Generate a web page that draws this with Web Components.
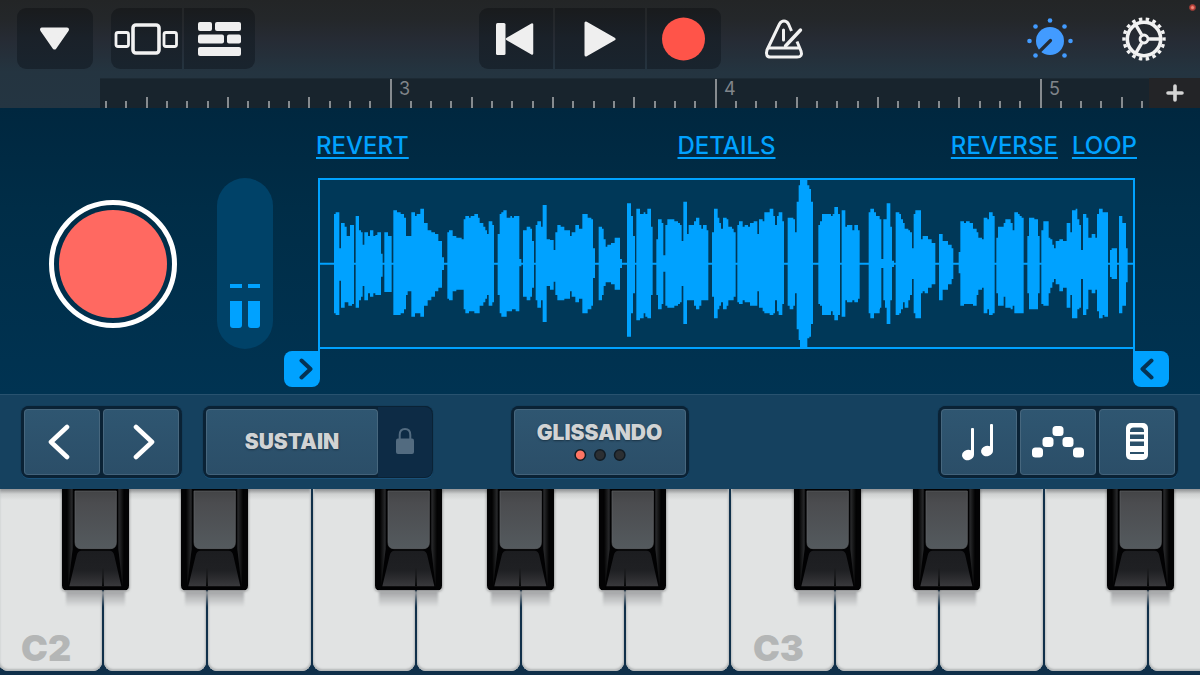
<!DOCTYPE html>
<html lang="en">
<head>
<meta charset="utf-8">
<title>Sampler</title>
<style>
  html { height: 100%; }
  body { margin: 0; min-height: 100%; display: flex; font-family: Inter, "Liberation Sans", sans-serif; background: #0f2f49; overflow: hidden; }
  sampler-app { flex: 1; min-width: 0; }
</style>
</head>
<body>
<sampler-app></sampler-app>

<script>
const define = (name, html, setup) => {
  const template = document.createElement('template');
  template.innerHTML = '<style>*{box-sizing:border-box}button{font:inherit;color:inherit;margin:0;padding:0;border:0;background:none;cursor:pointer}svg{display:block}</style>' + html;
  customElements.define(name, class extends HTMLElement {
    connectedCallback() {
      if (this.shadowRoot) return;
      const root = this.attachShadow({ mode: 'open' });
      root.append(template.content.cloneNode(true));
      if (setup) setup(this, root);
    }
  });
};

/* Segmented group of dark buttons in the top bar */
define('bar-group', `
<style>
  :host { display: flex; gap: 2px; height: 61px; border-radius: 9px; overflow: hidden; }
</style><slot></slot>`);

define('bar-button', `
<style>
  :host { display: block; width: 74px; }
  :host([wide]) { width: 90px; }
  :host([back]) { width: 76px; }
  :host([view]) { width: 71px; }
  button { display: grid; place-items: center; width: 100%; height: 100%; background: linear-gradient(#191b1d, #1a2129 50%, #19242e); }
</style><button><slot></slot></button>`, (host, root) => {
  root.querySelector('button').setAttribute('aria-label', host.getAttribute('label'));
});

define('icon-button', `
<style>:host { display: block; } button { display: block; }</style>
<button><slot></slot></button>`, (host, root) => {
  root.querySelector('button').setAttribute('aria-label', host.getAttribute('label'));
});

define('top-bar', `
<style>
  :host { display: grid; grid-template-columns: 1fr auto 1fr; padding: 8px 17px 9px; }
  .left, .right { display: flex; align-items: center; }
  .left { gap: 18px; }
  .right { padding: 0 17px 0 43px; }
  .knob { margin-left: auto; margin-right: 49px; }
  .live { position: absolute; top: 4px; right: 4px; width: 7px; height: 7px; border-radius: 50%; background: #c9493f; border: 1px solid #8d3b36; }
  .live::after { content: ""; display: block; width: 3px; height: 3px; margin: 1px; border-radius: 50%; background: #f08a7c; }
</style>
<div class="left">
  <bar-group><bar-button back label="Browser">
    <svg width="34" height="24" viewBox="0 0 34 24"><path d="M4 2.500H29L16.500 20.500Z" fill="#efefef" stroke="#efefef" stroke-width="4" stroke-linejoin="round"/></svg>
  </bar-button></bar-group>
  <bar-group>
    <bar-button view label="Instruments"><svg width="66" height="34" viewBox="0 0 66 34" fill="none" stroke="#f2f2f2"><rect x="19" y="3" width="26" height="28" rx="3" stroke-width="3.600"/><rect x="2" y="10.500" width="12.500" height="14" rx="2" stroke-width="2.800"/><rect x="50" y="10.500" width="12.500" height="14" rx="2" stroke-width="2.800"/></svg></bar-button>
    <bar-button view label="Tracks"><svg width="43" height="34" viewBox="0 0 43 34" fill="#efefef"><rect width="14" height="9" rx="2"/><rect x="17" width="26" height="9" rx="2"/><rect y="12.500" width="26" height="9" rx="2"/><rect x="29" y="12.500" width="14" height="9" rx="2"/><rect y="25" width="43" height="9" rx="2"/></svg></bar-button>
  </bar-group>
</div>
<bar-group>
  <bar-button label="Rewind"><svg width="40" height="34" viewBox="0 0 40 34" fill="#efefef"><rect y="1" width="9.500" height="32" rx="1.500"/><path d="M11 17 36 2.500V31.500Z" stroke="#efefef" stroke-width="2.500" stroke-linejoin="round"/></svg></bar-button>
  <bar-button wide label="Play"><svg width="32" height="38" viewBox="0 0 32 38"><path d="M2 3V35L30 19Z" fill="#efefef" stroke="#efefef" stroke-width="3" stroke-linejoin="round"/></svg></bar-button>
  <bar-button label="Record"><svg width="44" height="44"><circle cx="21.500" cy="22" r="21.500" fill="#ff5449"/></svg></bar-button>
</bar-group>
<div class="right">
  <icon-button label="Metronome"><svg width="40" height="40" viewBox="0 0 40 40" fill="none" stroke="#f2f2f2" stroke-width="3" stroke-linecap="round" stroke-linejoin="round"><path d="M27.500 12 24.500 5Q22.800 2 20 2T15.500 5L3 31Q1 38 6.500 38H33Q39 38 37 32L33 22.500M3 29H36.500" stroke-linecap="butt"/><path d="M19.500 11V21" stroke-width="3"/><path d="M21.500 27 36.500 11" stroke-width="3.400"/></svg></icon-button>
  <icon-button class="knob" label="Track controls"><svg width="46" height="44" viewBox="-23 -24 46 44" fill="#429bff"><circle r="14"/><g><circle cx="-20.500" r="2.300"/><circle cx="20.500" r="2.300"/><circle cy="-20.500" r="2.300"/><circle cx="-14.500" cy="-14.500" r="2.300"/><circle cx="14.500" cy="-14.500" r="2.300"/><circle cx="-14.500" cy="14.500" r="2.300"/><circle cx="14.500" cy="14.500" r="2.300"/></g><path d="M.5-.5-9.500 9.500" stroke="#242c36" stroke-width="3.200" stroke-linecap="round"/></svg></icon-button>
  <icon-button label="Settings"><svg width="44" height="44" viewBox="-22 -22 44 44" fill="none" stroke="#f2f2f2"><circle r="16.700" stroke-width="3.600"/><circle r="20" stroke-width="3.400" pathLength="180" stroke-dasharray="5 5" stroke-dashoffset="2.500"/><circle r="4" stroke-width="2.800"/><path d="M5 0H17M-2.500-4.300-8.500-14.700M-2.500 4.300-8.500 14.700" stroke-width="3.400"/></svg></icon-button>
</div>
<span class="live"></span>`);

/* One bar of the timeline: sixteen ticks and the bar's number */
define('ruler-bar', `
<style>
  :host { display: flex; position: relative; flex: 0 0 325px; height: 100%; overflow: hidden; }
  :host([partial]) { flex-basis: 290px; justify-content: flex-end; }
  svg { flex: none; fill: #868b8f; }
  span { position: absolute; left: 9px; top: 0; font-size: 18px; line-height: 21px; color: #80858a; }
</style><svg width="325" height="30"></svg><span><slot></slot></span>`, (host, root) => {
  let out = '';
  for (let i = 0; i < 16; i++) {
    const h = i === 0 ? 29 : i % 4 === 0 ? 11 : 7;
    out += `<rect x="${Math.floor(i * 325 / 16)}" y="${30 - h}" width="2" height="${h}"/>`;
  }
  root.querySelector('svg').innerHTML = out;
});

define('time-ruler', `
<style>
  :host { display: flex; height: 30px; padding-left: 100px; }
  .bars { flex: 1; min-width: 0; display: flex; overflow: hidden; background: #18242d; box-shadow: inset 0 1px #1d2a34; }
  button { width: 51px; background: #232427; display: grid; place-items: center; }
</style>
<div class="bars"><ruler-bar partial></ruler-bar><ruler-bar>3</ruler-bar><ruler-bar>4</ruler-bar><ruler-bar>5</ruler-bar></div>
<button aria-label="Add section"><svg width="18" height="18" viewBox="0 0 18 18" stroke="#d4d4d4" stroke-width="3.600" stroke-linecap="round"><path d="M9 2V16M2 9H16"/></svg></button>`);

define('level-meter', `
<style>
  :host { display: flex; justify-content: center; align-items: flex-end; gap: 6px; width: 56px; height: 171px; border-radius: 28px; background: #004268; padding-bottom: 21px; }
  i { display: block; width: 12px; height: 27px; border-radius: 0 0 3px 3px; background: #00a2ff; }
  i::before { content: ""; display: block; height: 4px; background: #00a2ff; transform: translateY(-17px); }
</style><i></i><i></i>`);

/* Sample envelope: x, top, bottom of each step; a lone x opens a gap. */
const ENVELOPE = [
  [-24, '72,282,580;77,277,585;88,385,482;93,309,563;104,320,547;110,348,547;115,348,557;120,315,557;126,315,552;132;137,288,563;147,331,541;153,337,530;158,374,498;163,337,541;174,348,520;180,331,530;190,348,520;196,345,525;202,337,525;213,401,470;218;223,337,516;234,348,516;245;250,271,585;261,277,585;272,282,580;282,293,568;288,348,525;293,348,514;304,277,590;315,288,580;320,282,580;331,266,590;342,309,557;353,331,541;364,337,530;375,342,514;385,363,503;396,412,450;402;412,337,536;417,331,541;428,348,514;439,353,509;455,358,509;461,298,568;466,288,580;477,293,574;482,288,574;493,282,580;504,293,580;509,309,557;520,320,547;526,331,536;531,342,525;536,304,557;547,315,547;552;563,342,525;569,282,580;574,277,590;580,271,590;590,293,574;601,288,574;606,293,568;612,288,568;617,288,574;628,417,439;634;639,331,530;650,320,541;661,326,530;666,363,503;672;677,315,541;682,304,563;693,320,541;698,255,606;710,358,498;720,360,509;731,390,485;736,337,525;742,315,541;752,320,541;763,331,536;780,348,514;785,337,530;796,315,547;807,326,536;817,282,580;833,293,568;844,298,557;849,385,474;855;866,320,541'],
  [846, '0,320,541;6,326,525;11,358,498;17,380,487;22,374,487;33,369,493;44,353,509;60,417,444;66;81,250,650;93,288,580;99,348,520;105;109,266,601;120,282,595;131,277,580;136,282,590;142,266,595;153,320,525;158;169,358,525;174,298,568;185,309,552;190,406,455;196,315,557;202,298,563;223,304,557;234,309,552;240,315,547;245,363,498;250,245,612;261,342,541;266,315,541;282,304,557;288,293,568;298,315,557;304,326,541;309,315,541;320,331,541;325;336,337,530;342,266,595;353,293,568;358,309,557;363,326,547;369,293,568;380,298,557;385,320,541;396,326,541;401,337,530;407;412,315,547;417,304,552;428,320,541;434,315,547;444,320,547;450,309,557;461,304,557;472,342,514;477,298,563;488,304,574;493,277,580;509,266,585;520,288,580;525,315,541;531,288,574;536,277,585;547,304,552;552;563,293,557;569,293,568;580,298,557;585,337,520;590,245,628;596,196,660;600,178,684;622,196,655;628,207,650;633,245,612;639;655,315,552;660,304,557;666,282,585;693,288,574;698,282,585;703,261,601;714,282,585;720;725,271,590;736,320,541;741,315,547;757,331,541;763,315,547;774,331,536;779;806,277,580;811,266,595;822,277,580;828,288,580;839,298,568'],
  [1686, '0,298,563;4,417,444;10,298,541;15,298,563;20,250,612;31,320,541;36,422,441;42;47,277,585;58,282,580;63,298,568;69,309,547;74,326,563;85,331,541;90,337,525;96,385,477;101,282,580;106,271,595;123,358,520;128,348,514;134,348,520;144,358,503;155,369,493;166;177,342,541;188,363,509;204,374,493;215,385,477;220;236,396,460;241,304,557;252,309,552;258,304,552;269,309,552;279,326,557;290,337,525;295,353,509;306,358,503;311,293,580;322,298,568;327,277,585;338,288,580;344;349,353,520;354,320,557;371,309,530;376,298,563;392,309,568;398,331,557;403,277,580;414,282,580;419,288,580;425,293,580;431;442,348,520;447,293,568;463,298,568;474,348,520;479;484,331,552;490,304,557;506,353,520;511,358,503;517,374,487;522,385,477;527,363,493;538,358,514;549,363,503;560,309,563;571,337,525;576,271,595;587,266,595;592,298,568;598,315,563;603,390,477;609,282,585;619,293,568;625,353,509;635,342,520;646,353,509;651,282,574;657,266,595;668,277,585;673,277,590;684;690,390,471;695,385,477;711;717,288,580;727,309,557;738,385,487;743']
];

define('wave-form', `
<style>
  :host { display: block; border: solid #00a2ff; border-width: 0 2px; padding-bottom: 2px; }
  .frame { height: 171px; border: solid #00a2ff; border-width: 2px 0; background: #003858; }
  svg { width: 100%; height: 100%; }
</style>
<div class="frame"><svg viewBox="6 6 2439 501" preserveAspectRatio="none" fill="#00a2ff"><path class="upper"/><path class="lower"/><path d="M0 254H2451V260H0Z"/></svg></div>`, (host, root) => {
  const steps = ENVELOPE.flatMap(([dx, s]) => s.split(';').map(t => {
    const [x, top, bottom] = t.split(',').map(Number);
    return [x + dx, top, bottom];
  }));
  const halves = { upper: '', lower: '' };
  let upper = '', lower = '', start = 0;
  steps.forEach(([x, top, bottom], i) => {
    if (!top) {
      halves.upper += `M${start} 257${upper}V257Z`;
      halves.lower += `M${start} 257${lower}V257Z`;
      upper = lower = '';
      return;
    }
    if (!upper) start = x;
    upper += `V${top - 174}H${steps[i + 1][0]}`;
    lower += `V${bottom - 174}H${steps[i + 1][0]}`;
  });
  for (const half in halves) root.querySelector('.' + half).setAttribute('d', halves[half]);
});

define('sample-panel', `
<style>
  :host { display: grid; grid-template-columns: 168px 101px 1fr; grid-template-rows: 70px auto 43px; padding: 0 65px 0 49px; background: linear-gradient(#00273f, #002d47 35%, #003352); color: #00a2ff; }
  .links { grid-column: 3; display: grid; grid-template-columns: 1fr auto 1fr; align-items: start; margin: 23px -2px 0; }
  .links button { justify-self: start; font-size: 24px; font-weight: 500; line-height: 30px; text-decoration: underline; text-decoration-thickness: 2px; text-underline-offset: 3px; text-decoration-skip-ink: none; }
  .end { display: flex; justify-content: flex-end; gap: 14px; }
  .record { grid-row: 2; grid-column: 1; width: 128px; height: 128px; align-self: center; margin-bottom: 2px; border-radius: 50%; border: 5px solid #fff; padding: 5px; }
  .record::before { content: ""; display: block; height: 100%; border-radius: 50%; background: #ff6961; }
  level-meter { grid-row: 2; grid-column: 2; }
  wave-form { grid-row: 2; grid-column: 3; }
  .handles { grid-row: 3; grid-column: 3; display: flex; justify-content: space-between; align-items: start; margin: 0 -34px; }
  .handles button { width: 36px; height: 36px; background: #00a2ff; border-radius: 8px 0 8px 8px; display: grid; place-items: center; }
  .handles button:last-child { border-radius: 0 8px 8px 8px; }
  .handles svg { margin-left: 8px; }
  .handles button:last-child svg { margin: 0 8px 0 0; }
</style>
<div class="links"><button>REVERT</button><button>DETAILS</button><div class="end"><button>REVERSE</button><button>LOOP</button></div></div>
<button class="record" aria-label="Record sample"></button>
<level-meter></level-meter>
<wave-form></wave-form>
<div class="handles">
  <button aria-label="Trim start"><svg width="14" height="22" viewBox="0 0 14 22" fill="none" stroke="#053354" stroke-width="4" stroke-linecap="round" stroke-linejoin="round"><path d="M2.500 2.500 11.500 11 2.500 19.500"/></svg></button>
  <button aria-label="Trim end"><svg width="14" height="22" viewBox="0 0 14 22" fill="none" stroke="#053354" stroke-width="4" stroke-linecap="round" stroke-linejoin="round"><path d="M11.500 2.500 2.500 11 11.500 19.500"/></svg></button>
</div>`);

define('pad-group', `
<style>
  :host { display: flex; gap: 3px; height: 72px; padding: 3px; border-radius: 8px; background: #0a2235; box-shadow: 0 1px #1a5179, 0 0 1px #0a2235; }
</style><slot></slot>`);

define('pad-button', `
<style>
  :host { display: block; width: 76px; }
  :host([wide]) { width: 172px; }
  :host([lock]) { width: 54px; margin: -2px -2px -2px -3px; }
  button { display: flex; flex-direction: column; gap: 6px; justify-content: center; align-items: center; width: 100%; height: 100%; border-radius: 4px; border: 1px solid #47677e; border-bottom-color: #43627a; background: linear-gradient(#2f5671, #2b4e68); color: #d1d3d4; font-size: 21px; font-weight: 900; line-height: 20px; text-shadow: 0 1px 2px #1b3345; }
  :host([lock]) button { border: 0; background: #0d2b45; border-radius: 0 7px 7px 0; }
</style><button><slot></slot></button>`, (host, root) => {
  if (host.hasAttribute('label')) root.querySelector('button').setAttribute('aria-label', host.getAttribute('label'));
});

define('control-strip', `
<style>
  :host { display: grid; grid-template-columns: 1fr auto 1fr; padding: 11px 22px 11px 21px; border-top: 1px solid #28526f; background: #15415f; }
  .left, .right { display: flex; gap: 21px; }
  .right { justify-content: flex-end; }
</style>
<div class="left">
  <pad-group>
    <pad-button label="Octave down"><svg width="30" height="36" viewBox="0 0 30 36" fill="none" stroke="#fff" stroke-width="4.600" stroke-linecap="round" stroke-linejoin="round"><path d="M20 3 4 18 20 33"/></svg></pad-button>
    <pad-button label="Octave up"><svg width="30" height="36" viewBox="0 0 30 36" fill="none" stroke="#fff" stroke-width="4.600" stroke-linecap="round" stroke-linejoin="round"><path d="M10 3 26 18 10 33"/></svg></pad-button>
  </pad-group>
  <pad-group>
    <pad-button wide>SUSTAIN</pad-button>
    <pad-button lock label="Lock sustain"><svg width="18" height="28" viewBox="0 0 18 28"><path d="M3.700 12V7Q3.700 1 9 1T14.300 7V12" fill="none" stroke="#526b80" stroke-width="2"/><rect y="10.500" width="18" height="15.500" rx="2" fill="#526b80"/></svg></pad-button>
  </pad-group>
</div>
<pad-group>
  <pad-button wide>GLISSANDO
    <svg width="52" height="12" viewBox="0 0 52 12" stroke="#111b23" stroke-width="1.500"><circle cx="6.300" cy="6" r="5.200" fill="#ff7564"/><circle cx="26" cy="6" r="5.200" fill="#2c2f32"/><circle cx="45.700" cy="6" r="5.200" fill="#2c2f32"/></svg>
  </pad-button>
</pad-group>
<div class="right">
  <pad-group>
    <pad-button label="Notes"><svg width="34" height="38" viewBox="0 0 34 38" fill="#fff"><ellipse cx="6" cy="32" rx="6" ry="5.200" transform="rotate(-15 6 32)"/><rect x="9" y="5" width="3" height="27" rx="1"/><ellipse cx="25" cy="28" rx="6" ry="5.200" transform="rotate(-15 25 28)"/><rect x="28" y="1" width="3" height="27" rx="1"/></svg></pad-button>
    <pad-button label="Arpeggiator"><svg width="52" height="32" viewBox="0 0 52 32" fill="#fff"><rect x="20.500" y="0" width="11" height="10" rx="3.500"/><rect x="10.500" y="11" width="11" height="10" rx="3.500"/><rect x="30.500" y="11" width="11" height="10" rx="3.500"/><rect y="21.500" width="11" height="10" rx="3.500"/><rect x="41" y="21.500" width="11" height="10" rx="3.500"/></svg></pad-button>
    <pad-button label="Keyboard size"><svg width="22" height="38" viewBox="0 0 22 38"><rect width="22" height="37" rx="5" fill="#fff"/><path d="M4 9V8Q4 4.500 7.500 4.500H14.500Q18 4.500 18 8V9ZM4 11.500H18V16H4ZM4 18.500H18V23H4ZM4 29H18V31H4Z" fill="#2b506a"/></svg></pad-button>
  </pad-group>
</div>`);

define('black-key', `
<style>
  :host { display: block; width: 67px; height: 102px; }
  button { display: block; width: 100%; height: 100%; border-radius: 0 0 4px 4px; box-shadow: 0 0 3px #0008; }
  button::after { content: ""; display: block; height: 16px; margin: 0 4px; background: linear-gradient(#a0a2a4, #e1e3e300); filter: blur(1px); }
  svg { position: relative; z-index: 1; }
</style>
<button><svg width="67" height="102" viewBox="0 0 201 306">
  <defs>
    <linearGradient id="side"><stop offset="0" stop-color="#000"/><stop offset=".1" stop-color="#2b2c2e"/><stop offset=".18" stop-color="#0c0d0e"/><stop offset=".82" stop-color="#0c0d0e"/><stop offset=".9" stop-color="#2b2c2e"/><stop offset="1" stop-color="#000"/></linearGradient>
    <linearGradient id="cap" x2="0" y2="1"><stop offset="0" stop-color="#434446"/><stop offset=".2" stop-color="#4b4c4f"/><stop offset="1" stop-color="#545a5e"/></linearGradient>
    <linearGradient id="front" x2="0" y2="1"><stop offset="0" stop-color="#1c1d20"/><stop offset=".55" stop-color="#1f2023"/><stop offset="1" stop-color="#39393c"/></linearGradient>
  </defs>
  <path d="M0 0H201V290Q201 304 187 304H14Q0 304 0 290Z" fill="#030304"/>
  <path d="M14 0H187V200L181 295H20L14 200Z" fill="url(#side)"/>
  <path d="M32 0H169V180L182 298H18L32 180Z" fill="#020203"/>
  <path d="M39 6H163V160Q163 179 145 179H57Q39 179 39 160Z" fill="url(#cap)" stroke="#606366" stroke-width="2"/>
  <path d="M59 185H142Q154 185 157 200L178 292H22L44 200Q47 185 59 185Z" fill="url(#front)"/>
  <path class="seam" fill="#08090a"/>
</svg></button>`, (host, root) => {
  const x = Number(host.getAttribute('seam')) * 3;
  root.querySelector('.seam').setAttribute('d', `M${x} 236L${x + 3} 292H${x - 3}Z`);
});

define('piano-key', `
<style>
  :host { display: block; position: relative; flex: 0 0 8.7%; padding: 0 1px; }
  .white { display: flex; align-items: flex-end; width: 100%; height: 100%; padding: 0 0 2px 22px; border-radius: 0 0 9px 9px; background: linear-gradient(#8c8e90, #cfd1d1 5px, #e1e3e3 11px); box-shadow: inset 0 -2px 2px #b4b7b8, inset 2px 0 2px -1px #c6c9ca, inset -2px 0 2px -1px #c0c3c4; font-size: 36px; font-weight: 900; line-height: 42px; color: #b4b6b6; }
  black-key { position: absolute; top: 0; z-index: 1; left: 61%; }
  :host([sharp="right"]) black-key { left: 75%; }
  :host([sharp="middle"]) black-key { left: 68%; }
</style><button class="white"><slot></slot></button>`, (host, root) => {
  const sharp = host.getAttribute('sharp');
  if (!sharp) return;
  const key = document.createElement('black-key');
  key.setAttribute('seam', { left: 41, middle: 33, right: 26 }[sharp]);
  root.append(key);
});

define('piano-keyboard', `
<style>
  :host { display: flex; min-height: 186px; padding-bottom: 4px; margin-left: -2px; overflow: hidden; background: #10304a; }
</style>
<piano-key sharp="left">C2</piano-key><piano-key sharp="right"></piano-key><piano-key></piano-key>
<piano-key sharp="left"></piano-key><piano-key sharp="middle"></piano-key><piano-key sharp="right"></piano-key><piano-key></piano-key>
<piano-key sharp="left">C3</piano-key><piano-key sharp="right"></piano-key><piano-key></piano-key>
<piano-key sharp="left"></piano-key><piano-key sharp="middle"></piano-key>`);

define('sampler-app', `
<style>
  :host { display: flex; flex-direction: column; position: relative; }
  header { background: linear-gradient(#232526, #24272a 18%, #262b34 36%, #243440 66%, #243542); }
  piano-keyboard { flex: 1; }
</style>
<header><top-bar></top-bar><time-ruler></time-ruler></header>
<sample-panel></sample-panel>
<control-strip></control-strip>
<piano-keyboard></piano-keyboard>`);
</script>
</body>
</html>
